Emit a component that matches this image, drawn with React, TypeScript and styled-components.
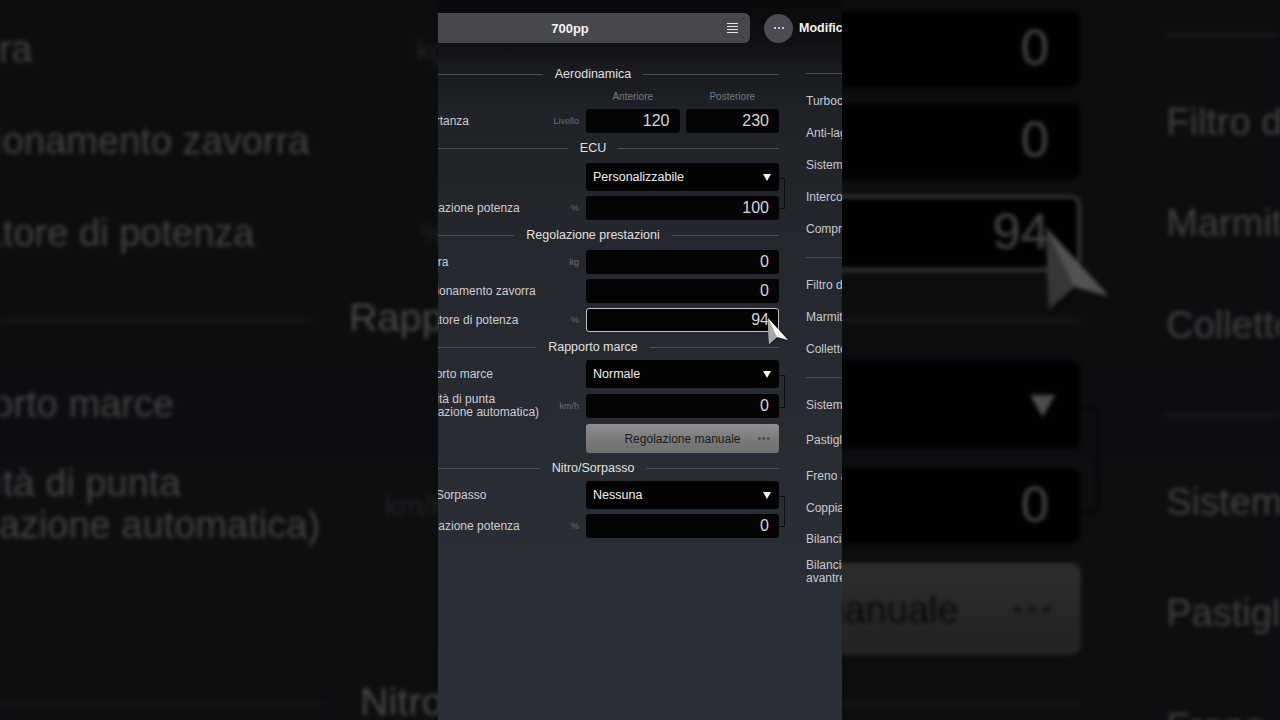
import React from 'react';
import styled, { createGlobalStyle } from 'styled-components';

const GlobalStyle = createGlobalStyle`
  html, body {
    margin: 0;
    padding: 0;
    background: #0c0d10;
  }
  * {
    box-sizing: border-box;
  }
`;

// Page: blurred, enlarged copy behind, sharp strip in front
const Page = styled.div`
  width: 1280px;
  height: 720px;
  overflow: hidden;
  display: grid;
  background: #0c0d10;
`;

const Backdrop = styled.div`
  grid-area: 1 / 1;
  justify-self: center;
  width: 404px;
  height: 720px;
  transform: scale(3.17);
  filter: brightness(0.32) blur(0.6px);
`;

const Front = styled.div`
  grid-area: 1 / 1;
  justify-self: center;
  width: 404px;
  height: 720px;
`;

// Game screen
const Screen = styled.div`
  position: relative;
  width: 404px;
  height: 720px;
  overflow: hidden;
  font-family: 'Liberation Sans', Arial, sans-serif;
  background: linear-gradient(
    180deg,
    #09090a 0px,
    #0f1012 40px,
    #181a1d 65px,
    #1f2226 110px,
    #25282e 260px,
    #282c33 450px,
    #2b3038 720px
  );
`;

const Stage = styled.div`
  width: 820px;
  margin-left: -48px;
  padding-top: 13px;
`;

const TopRow = styled.div`
  display: flex;
  align-items: center;
  height: 30px;
`;

const TitleBar = styled.div`
  width: 360px;
  height: 30px;
  border-radius: 6px;
  background: #46484d;
  display: grid;
  grid-template-columns: 1fr auto 1fr;
  align-items: center;
`;

const TitleText = styled.span`
  grid-column: 2;
  font-size: 13px;
  font-weight: 700;
  color: #f4f4f4;
`;

const MenuIcon = styled.div`
  grid-column: 3;
  justify-self: end;
  margin-right: 12px;
  width: 11px;
  display: flex;
  flex-direction: column;
  gap: 1.6px;

  span {
    display: block;
    height: 1.5px;
    background: #e6e6e6;
  }
`;

const MoreButton = styled.div`
  width: 29px;
  height: 29px;
  margin-left: 14px;
  border-radius: 50%;
  background: #4a4b53;
  display: flex;
  align-items: center;
  justify-content: center;
  gap: 2px;

  span {
    width: 2px;
    height: 2px;
    border-radius: 50%;
    background: #f0f0f0;
  }
`;

const TopLabel = styled.span`
  margin-left: 6px;
  font-size: 12.5px;
  font-weight: 700;
  color: #f2f2f2;
  white-space: nowrap;
`;

const Columns = styled.div`
  display: grid;
  grid-template-columns: 372px 372px;
  column-gap: 27px;
  padding-left: 17px;
  margin-top: 21px;
  align-items: start;
`;

const LeftColumn = styled.div`
  display: flex;
  flex-direction: column;
  gap: 5px;
`;

const SectionHead = styled.div<{ $pad?: number; $pull?: number }>`
  display: flex;
  align-items: center;
  gap: 12px;
  height: ${({ $pad = 0 }) => 20 + $pad * 2}px;
  margin-bottom: ${({ $pull = 0 }) => -$pull}px;
  font-size: 12.5px;
  color: #e0e0e0;
  white-space: nowrap;

  &::before,
  &::after {
    content: '';
    flex: 1;
    height: 1px;
    background: #4b4f55;
  }
`;

const FieldRow = styled.div`
  display: grid;
  grid-template-columns: 1fr 30px 193px;
  column-gap: 7px;
  align-items: center;
`;

const Label = styled.div`
  font-size: 12px;
  line-height: 13px;
  color: #cdced1;
  white-space: nowrap;
`;

const Unit = styled.div`
  text-align: right;
  font-size: 9px;
  color: #6b6e73;
  white-space: nowrap;
`;

const ValueBox = styled.div<{ $focused?: boolean }>`
  height: 24px;
  border-radius: 3px;
  background: #040404;
  border: 1px solid ${({ $focused }) => ($focused ? '#c2c2c2' : 'transparent')};
  display: flex;
  align-items: center;
  justify-content: flex-end;
  padding-right: 9px;
  font-size: 16px;
  color: #d6d6d6;
`;

const Pair = styled.div`
  display: grid;
  grid-template-columns: 1fr 1fr;
  column-gap: 6px;
`;

const ColHead = styled.div`
  height: 15px;
  text-align: center;
  font-size: 10px;
  line-height: 15px;
  color: #777a7e;
`;

const Linked = styled.div`
  position: relative;
  display: flex;
  flex-direction: column;
  gap: 5px;

  &::after {
    content: '';
    position: absolute;
    right: -6px;
    top: 15px;
    bottom: 11px;
    width: 6px;
    border: 1.5px solid #0b0c0e;
    border-left: none;
  }
`;

const Dropdown = styled.div`
  height: 28px;
  border-radius: 3px;
  background: #030303;
  display: flex;
  align-items: center;
  justify-content: space-between;
  padding: 0 8px 0 7px;
  font-size: 12.5px;
  color: #f0f0f0;
`;

const ManualButton = styled.div`
  height: 29px;
  border-radius: 3px;
  background: linear-gradient(180deg, #8e8e8e 0%, #7a7a7a 55%, #6f6f6f 100%);
  display: grid;
  grid-template-columns: 1fr auto 1fr;
  align-items: center;
  font-size: 12px;
  color: #1a1a1a;
`;

const ButtonText = styled.span`
  grid-column: 2;
`;

const ButtonDots = styled.span`
  grid-column: 3;
  justify-self: end;
  margin-right: 8px;
  font-size: 10px;
  letter-spacing: 1px;
  color: #4a4a4a;
`;

const RightColumn = styled.div`
  display: flex;
  flex-direction: column;
  margin-top: -3px;
`;

const RightItem = styled.div<{ $h?: number }>`
  height: ${({ $h = 32 }) => $h}px;
  display: flex;
  align-items: center;
  font-size: 12px;
  line-height: 13px;
  color: #c9cacd;
  white-space: nowrap;
`;

const Cursor = styled.svg`
  position: absolute;
  left: 329px;
  top: 317px;
  filter: drop-shadow(1px 1px 1px rgba(0, 0, 0, 0.45));
`;

const Arrow: React.FC = () => (
  <svg width="8" height="7" viewBox="0 0 8 7">
    <polygon points="0,0 8,0 4,7" fill="#f2f2f2" />
  </svg>
);

interface FieldProps {
  label: React.ReactNode;
  unit?: string;
  value: string;
  focused?: boolean;
}

const Field: React.FC<FieldProps> = ({ label, unit, value, focused }) => (
  <FieldRow>
    <Label>{label}</Label>
    <Unit>{unit}</Unit>
    <ValueBox $focused={focused}>{value}</ValueBox>
  </FieldRow>
);

const Select: React.FC<{ label: string; value: string }> = ({ label, value }) => (
  <FieldRow>
    <Label>{label}</Label>
    <Unit />
    <Dropdown>
      <span>{value}</span>
      <Arrow />
    </Dropdown>
  </FieldRow>
);

const GameScreen: React.FC = () => (
  <Screen>
    <Stage>
      <TopRow>
        <TitleBar>
          <TitleText>700pp</TitleText>
          <MenuIcon>
            <span />
            <span />
            <span />
            <span />
          </MenuIcon>
        </TitleBar>
        <MoreButton>
          <span />
          <span />
          <span />
        </MoreButton>
        <TopLabel>Modifica impostazioni</TopLabel>
      </TopRow>

      <Columns>
        <LeftColumn>
          <SectionHead>Aerodinamica</SectionHead>
          <FieldRow>
            <span />
            <span />
            <Pair>
              <ColHead>Anteriore</ColHead>
              <ColHead>Posteriore</ColHead>
            </Pair>
          </FieldRow>
          <FieldRow>
            <Label>Deportanza</Label>
            <Unit>Livello</Unit>
            <Pair>
              <ValueBox>120</ValueBox>
              <ValueBox>230</ValueBox>
            </Pair>
          </FieldRow>

          <SectionHead>ECU</SectionHead>
          <Linked>
            <Select label="ECU" value="Personalizzabile" />
            <Field label="Regolazione potenza" unit="%" value="100" />
          </Linked>

          <SectionHead>Regolazione prestazioni</SectionHead>
          <Field label="Zavorra" unit="kg" value="0" />
          <Field label="Posizionamento zavorra" value="0" />
          <Field label="Limitatore di potenza" unit="%" value="94" focused />

          <SectionHead $pull={2}>Rapporto marce</SectionHead>
          <Linked>
            <Select label="Rapporto marce" value="Normale" />
            <Field
              label={
                <>
                  Velocità di punta
                  <br />
                  (regolazione automatica)
                </>
              }
              unit="km/h"
              value="0"
            />
          </Linked>
          <FieldRow>
            <span />
            <span />
            <ManualButton>
              <ButtonText>Regolazione manuale</ButtonText>
              <ButtonDots>•••</ButtonDots>
            </ManualButton>
          </FieldRow>

          <SectionHead $pull={2}>Nitro/Sorpasso</SectionHead>
          <Linked>
            <Select label="Nitro/Sorpasso" value="Nessuna" />
            <Field label="Regolazione potenza" unit="%" value="0" />
          </Linked>
        </LeftColumn>

        <RightColumn>
          <SectionHead $pad={2}>Motore</SectionHead>
          <RightItem>Turbocompressore</RightItem>
          <RightItem>Anti-lag</RightItem>
          <RightItem>Sistema di iniezione</RightItem>
          <RightItem>Intercooler</RightItem>
          <RightItem>Compressore volumetrico</RightItem>
          <SectionHead $pad={2}>Aspirazione e scarico</SectionHead>
          <RightItem>Filtro dell'aria</RightItem>
          <RightItem>Marmitta</RightItem>
          <RightItem>Collettore di scarico</RightItem>
          <SectionHead $pad={2}>Freni</SectionHead>
          <RightItem>Sistema frenante</RightItem>
          <RightItem $h={38}>Pastiglie dei freni</RightItem>
          <RightItem $h={34}>Freno a mano</RightItem>
          <RightItem $h={30}>Coppia freno a mano</RightItem>
          <RightItem>Bilanciamento freni</RightItem>
          <RightItem $h={34}>
            Bilanciamento freni
            <br />
            avantreno/retrotreno
          </RightItem>
        </RightColumn>
      </Columns>
    </Stage>

    <Cursor width="24" height="28" viewBox="0 0 24 28">
      <polygon points="1,1 21,23 10,20 2,27" fill="#ffffff" />
      <polygon points="1,1 10,20 2,27" fill="#a9a9a9" />
    </Cursor>
  </Screen>
);

const App: React.FC = () => (
  <>
    <GlobalStyle />
    <Page>
      <Backdrop>
        <GameScreen />
      </Backdrop>
      <Front>
        <GameScreen />
      </Front>
    </Page>
  </>
);

export default App;
